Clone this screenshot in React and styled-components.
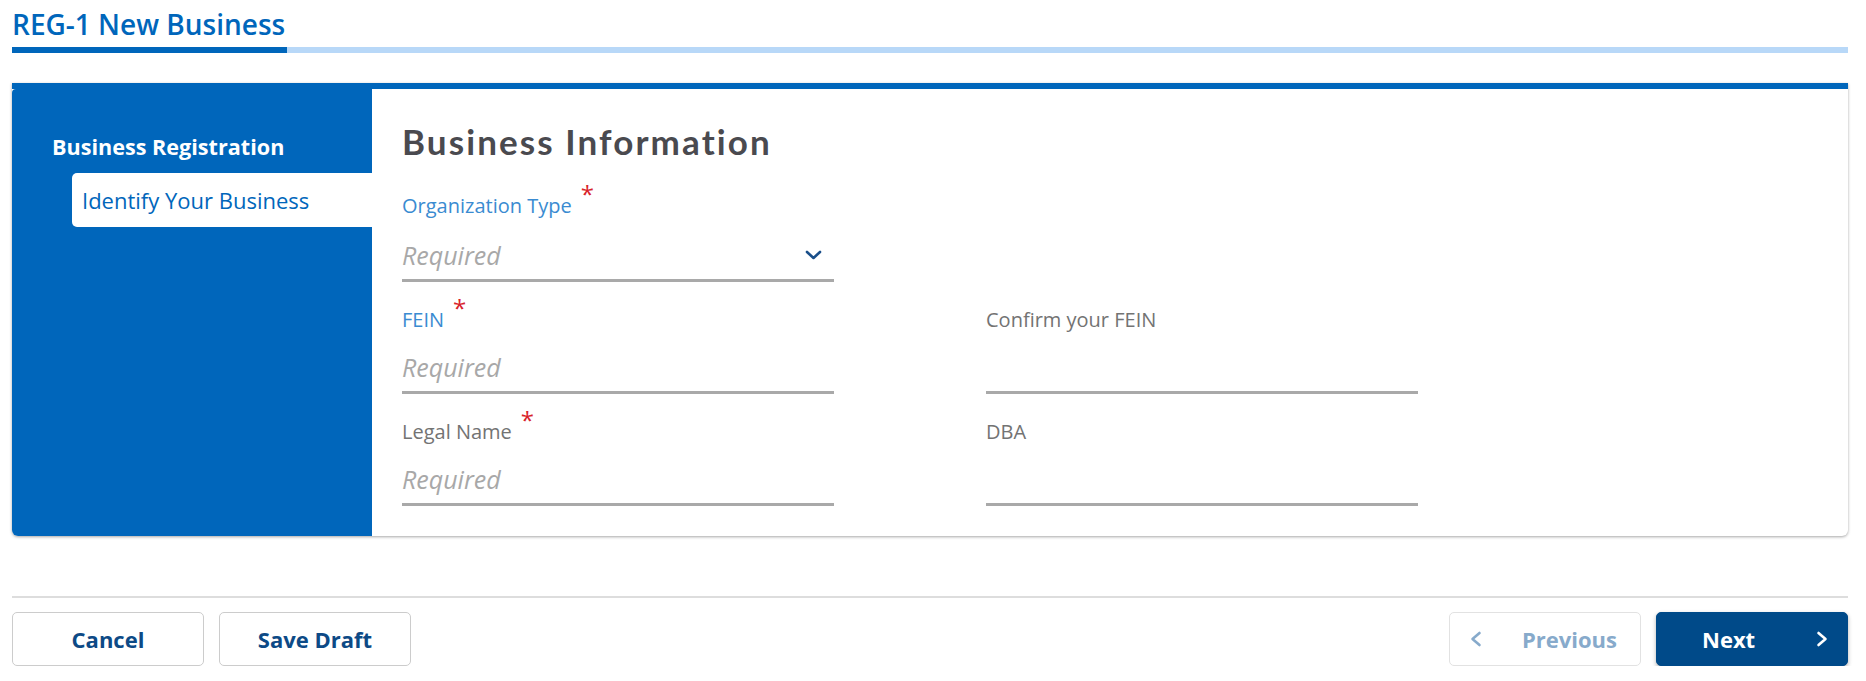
import React from "react";
import styled, { createGlobalStyle } from "styled-components";

const Global = createGlobalStyle`
  html, body { margin: 0; padding: 0; background: #ffffff; }
  body { font-family: "Open Sans", "Noto Sans", sans-serif; }
  * { box-sizing: border-box; }
`;

const Page = styled.div`
  padding: 7px 18px 0 12px;
  display: flex;
  flex-direction: column;
`;

const Title = styled.h1`
  margin: 0;
  font-size: 28px;
  line-height: 34px;
  font-weight: 600;
  color: #0066bb;
`;

const Progress = styled.div`
  margin-top: 6px;
  height: 6px;
  background: #b8d8f8;
  display: flex;
`;

const ProgressFill = styled.div`
  height: 100%;
  background: #0066bb;
`;

const Card = styled.section`
  margin-top: 30px;
  border-top: 6px solid #0066bb;
  display: flex;
  background: #fff;
  border-radius: 0 0 6px 6px;
  box-shadow: 0 1px 3px rgba(0, 0, 0, 0.35);
`;

const Sidebar = styled.nav`
  width: 360px;
  flex-shrink: 0;
  background: #0066bb;
  border-radius: 4px 0 0 6px;
  padding: 43px 0 0 40px;
  display: flex;
  flex-direction: column;
`;

const SideTitle = styled.div`
  font-size: 21.6px;
  line-height: 30px;
  font-weight: 700;
  color: #ffffff;
`;

const SideItem = styled.div`
  margin: 11px 0 0 20px;
  padding: 12px 10px;
  background: #ffffff;
  border-radius: 5px 0 0 5px;
  font-size: 22px;
  line-height: 30px;
  color: #0066bb;
`;

const Content = styled.div`
  flex: 1;
  padding: 31px 30px 30px 30px;
`;

const Heading = styled.h2`
  margin: 0;
  font-family: "Lato", "Open Sans", sans-serif;
  font-weight: 700;
  font-size: 35px;
  line-height: 42px;
  letter-spacing: 2.1px;
  color: #4a4a4f;
`;

const Grid = styled.div`
  margin-top: 30px;
  display: grid;
  grid-template-columns: 432px 432px;
  column-gap: 152px;
  row-gap: 24px;
`;

const Field = styled.div`
  display: flex;
  flex-direction: column;
  grid-column: ${(p) => (p.$full ? "1 / -1" : "auto")};
  width: 432px;
`;

const Label = styled.label`
  font-size: 20px;
  line-height: 28px;
  color: ${(p) => (p.$active ? "#3a8bd1" : "#737373")};
  display: flex;
  align-items: flex-start;
`;

const Star = styled.span`
  color: #d8232a;
  font-size: 24px;
  line-height: 18px;
  margin-left: 9px;
  margin-top: -7px;
`;

const InputBox = styled.div`
  margin-top: 18px;
  height: ${(p) => (p.$tall ? 44 : 42)}px;
  border-bottom: 3px solid #a9a9a9;
  display: flex;
  align-items: center;
  justify-content: space-between;
  padding: 0 12px ${(p) => (p.$tall ? 7 : 9)}px 0;
`;

const Placeholder = styled.span`
  font-size: 25px;
  line-height: 32px;
  font-style: italic;
  color: #a8a8a8;
`;

const Footer = styled.footer`
  margin-top: 60px;
  border-top: 2px solid #dddddd;
  padding-top: 14px;
  display: flex;
  justify-content: space-between;
`;

const Group = styled.div`
  display: flex;
  gap: 15px;
`;

const Button = styled.button`
  width: 192px;
  height: 54px;
  border-radius: 5px;
  font-family: "Open Sans", sans-serif;
  font-size: 22px;
  font-weight: 700;
  display: flex;
  align-items: center;
  justify-content: ${(p) => p.$justify || "center"};
  padding: ${(p) => p.$pad || "0"};
  cursor: pointer;
  border: 1px solid
    ${(p) => (p.$variant === "primary" ? "#004a89" : p.$variant === "disabled" ? "#e2e2e2" : "#cccccc")};
  background: ${(p) => (p.$variant === "primary" ? "#004a89" : "#ffffff")};
  color: ${(p) =>
    p.$variant === "primary" ? "#ffffff" : p.$variant === "disabled" ? "#87aacb" : "#0d4a86"};
  box-shadow: ${(p) => (p.$variant === "primary" ? "0 2px 4px rgba(0,0,0,0.3)" : "none")};
`;

const Chevron = ({ dir = "right", color, w = 12, h = 16, sw = 2.6 }) => {
  const pts = dir === "right" ? "2,2 9,8 2,14" : "9,2 2,8 9,14";
  return (
    <svg width={w} height={h} viewBox="0 0 11 16" fill="none">
      <polyline points={pts} stroke={color} strokeWidth={sw} strokeLinecap="round" strokeLinejoin="round" />
    </svg>
  );
};

const DownChevron = () => (
  <svg width="17" height="10" viewBox="0 0 17 10" fill="none">
    <polyline points="2,2 8.5,8 15,2" stroke="#1a4f8a" strokeWidth="2.6" strokeLinecap="round" strokeLinejoin="round" />
  </svg>
);

export default function App() {
  const progress = 15;
  return (
    <>
      <Global />
      <Page>
        <Title>REG-1 New Business</Title>
        <Progress>
          <ProgressFill style={{ width: `${progress}%` }} />
        </Progress>
        <Card>
          <Sidebar>
            <SideTitle>Business Registration</SideTitle>
            <SideItem>Identify Your Business</SideItem>
          </Sidebar>
          <Content>
            <Heading>Business Information</Heading>
            <Grid>
              <Field $full>
                <Label $active>
                  Organization Type<Star>*</Star>
                </Label>
                <InputBox $tall>
                  <Placeholder>Required</Placeholder>
                  <DownChevron />
                </InputBox>
              </Field>
              <Field>
                <Label $active>
                  FEIN<Star>*</Star>
                </Label>
                <InputBox>
                  <Placeholder>Required</Placeholder>
                </InputBox>
              </Field>
              <Field>
                <Label>Confirm your FEIN</Label>
                <InputBox />
              </Field>
              <Field>
                <Label>
                  Legal Name<Star>*</Star>
                </Label>
                <InputBox>
                  <Placeholder>Required</Placeholder>
                </InputBox>
              </Field>
              <Field>
                <Label>DBA</Label>
                <InputBox />
              </Field>
            </Grid>
          </Content>
        </Card>
        <Footer>
          <Group>
            <Button>Cancel</Button>
            <Button>Save Draft</Button>
          </Group>
          <Group>
            <Button $variant="disabled" $justify="space-between" $pad="0 23px 0 20px">
              <Chevron dir="left" color="#87aacb" />
              Previous
            </Button>
            <Button $variant="primary" $justify="space-between" $pad="0 19px 0 45px">
              Next
              <Chevron dir="right" color="#ffffff" />
            </Button>
          </Group>
        </Footer>
      </Page>
    </>
  );
}
